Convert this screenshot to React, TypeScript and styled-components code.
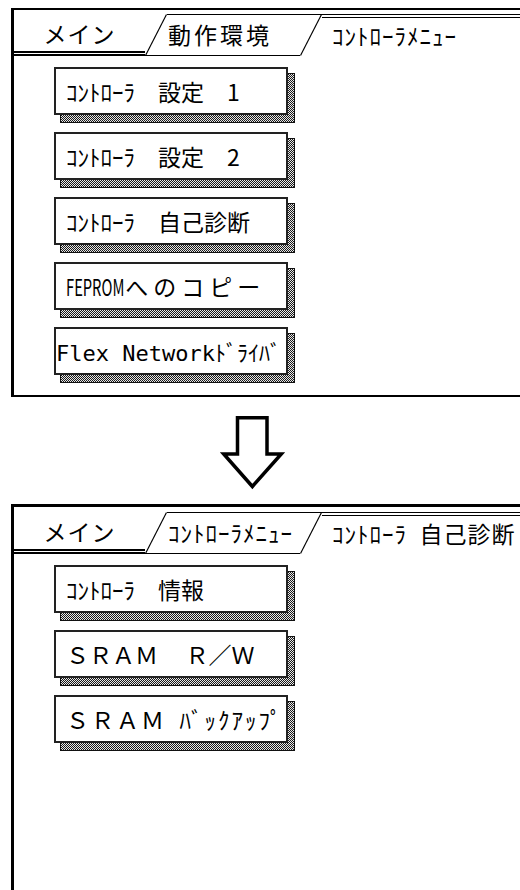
import type { ReactNode } from "react";
import styled, { createGlobalStyle } from "styled-components";

const GlobalStyle = createGlobalStyle`
  html, body {
    margin: 0;
    padding: 0;
    background: #ffffff;
  }
  body {
    font-family: "Noto Sans CJK JP", "Noto Sans", sans-serif;
    color: #000;
    overflow: hidden;
  }
`;

type Edge = "none" | "single" | "double";

const edge = (kind: Edge, doubleWidth: number) => {
  if (kind === "single") return "1px solid #000";
  if (kind === "double") return `${doubleWidth}px double #000`;
  return "0 none";
};

const Page = styled.div`
  width: 520px;
  height: 890px;
  padding-top: 8px;
  box-sizing: border-box;
  display: flex;
  flex-direction: column;
  overflow: hidden;
`;

const Panel = styled.section<{ $open?: boolean }>`
  flex-shrink: 0;
  margin-left: 11px;
  height: ${(p) => (p.$open ? "386px" : "389px")};
  box-sizing: border-box;
  border-left: 3px solid #000;
  border-top: ${(p) => (p.$open ? "3px" : "2px")} solid #000;
  border-bottom: ${(p) => (p.$open ? "none" : "2px solid #000")};
  display: flex;
  flex-direction: column;
`;

const TabBar = styled.div<{ $offset: number }>`
  display: flex;
  height: 42px;
  margin-top: ${(p) => p.$offset}px;
`;

const Tab = styled.div<{
  $top: Edge;
  $bottom: Edge;
  $width?: number;
  $pad: number;
  $lift?: number;
  $center?: boolean;
  $spacing: number;
}>`
  box-sizing: border-box;
  height: 100%;
  ${(p) => (p.$width ? `width: ${p.$width}px; flex-shrink: 0;` : "flex: 1;")}
  border-top: ${(p) => edge(p.$top, 4)};
  border-bottom: ${(p) => edge(p.$bottom, 5)};
  display: flex;
  align-items: center;
  justify-content: ${(p) => (p.$center ? "center" : "flex-start")};
  padding: 0 0 ${(p) => p.$lift ?? 0}px ${(p) => p.$pad}px;
  font-size: 23px;
  letter-spacing: ${(p) => p.$spacing}px;
  white-space: nowrap;
  overflow: hidden;
`;

const SlantBox = styled.svg`
  display: block;
  flex-shrink: 0;
  width: 22px;
  height: 42px;
`;

const Slant = ({ top, bottom }: { top?: boolean; bottom?: boolean }) => (
  <SlantBox viewBox="0 0 22 42">
    <line x1="0.5" y1="41.5" x2="21.5" y2="0.5" stroke="#000" strokeWidth="1.2" />
    {top && <line x1="0" y1="0.5" x2="22" y2="0.5" stroke="#000" strokeWidth="1" />}
    {bottom && <line x1="0" y1="41.5" x2="22" y2="41.5" stroke="#000" strokeWidth="1" />}
  </SlantBox>
);

const Menu = styled.div`
  display: flex;
  flex-direction: column;
  gap: 9px;
  padding: 11px 0 0 40px;
`;

const MenuItem = styled.div`
  position: relative;
  width: 234px;
  padding: 0 7px 8px 0;

  &::before {
    content: "";
    position: absolute;
    left: 6px;
    top: 6px;
    right: 0;
    bottom: 0;
    border: 1px solid #111;
    background: repeating-conic-gradient(#1a1a1a 0% 25%, #e8e8e8 0% 50%) 0 0 / 2px 2px;
  }
`;

const MenuButton = styled.button<{ $pad: number; $spacing: number; $mono?: boolean }>`
  position: relative;
  z-index: 1;
  display: flex;
  align-items: center;
  box-sizing: border-box;
  width: 234px;
  height: 48px;
  margin: 0;
  padding: 0 0 0 ${(p) => p.$pad}px;
  border: 2px solid #222;
  background: #fff;
  color: #000;
  font-family: ${(p) => (p.$mono ? '"DejaVu Sans Mono", ' : "")}"Noto Sans CJK JP", sans-serif;
  font-size: ${(p) => (p.$mono ? 22 : 23)}px;
  letter-spacing: ${(p) => p.$spacing}px;
  white-space: nowrap;
  overflow: hidden;
  cursor: pointer;
`;

const Condensed = styled.span`
  display: inline-block;
  transform: scaleX(0.64);
  transform-origin: left center;
  margin-right: -32px;
`;

const Wide = styled.span`
  letter-spacing: 5px;
`;

const ArrowRow = styled.div`
  flex-shrink: 0;
  height: 107px;
  box-sizing: border-box;
  padding: 16px 0 0 219px;
`;

const ArrowSvg = styled.svg`
  display: block;
  width: 68px;
  height: 82px;
`;

type Item = { id: string; label: ReactNode; pad?: number; spacing?: number; mono?: boolean };

const settingsMenu: Item[] = [
  { id: "set1", label: "ｺﾝﾄﾛｰﾗ\u3000設定\u30001" },
  { id: "set2", label: "ｺﾝﾄﾛｰﾗ\u3000設定\u30002" },
  { id: "diag", label: "ｺﾝﾄﾛｰﾗ\u3000自己診断" },
  {
    id: "feprom",
    label: (
      <>
        <Condensed>FEPROM</Condensed>
        <Wide>へのコピー</Wide>
      </>
    ),
  },
  { id: "flex", label: "Flex Networkﾄﾞﾗｲﾊﾞ", pad: 0, mono: true },
];

const diagMenu: Item[] = [
  { id: "info", label: "ｺﾝﾄﾛｰﾗ\u3000情報" },
  { id: "sram-rw", label: "ＳＲＡＭ\u3000\u2009Ｒ／Ｗ" },
  { id: "sram-bk", label: "ＳＲＡＭ\u2002ﾊﾞｯｸｱｯﾌﾟ", spacing: 2 },
];

const MenuList = ({ items }: { items: Item[] }) => (
  <Menu>
    {items.map((it) => (
      <MenuItem key={it.id}>
        <MenuButton $pad={it.pad ?? 10} $spacing={it.spacing ?? 0} $mono={it.mono}>
          {it.label}
        </MenuButton>
      </MenuItem>
    ))}
  </Menu>
);

const Tabs = ({ second, current, offset }: { second: string; current: string; offset: number }) => (
  <TabBar $offset={offset}>
    <Tab $top="none" $bottom="double" $width={131} $pad={0} $center $spacing={1}>
      メイン
    </Tab>
    <Slant bottom />
    <Tab $top="single" $bottom="single" $width={133} $pad={1} $lift={2} $spacing={second.length > 5 ? 1 : 3}>
      {second}
    </Tab>
    <Slant top />
    <Tab $top="double" $bottom="none" $pad={10} $lift={5} $spacing={1}>
      {current}
    </Tab>
  </TabBar>
);

const App = () => (
  <>
    <GlobalStyle />
    <Page>
      <Panel>
        <Tabs second="動作環境" current="ｺﾝﾄﾛｰﾗﾒﾆｭｰ" offset={4} />
        <MenuList items={settingsMenu} />
      </Panel>
      <ArrowRow>
        <ArrowSvg viewBox="0 0 68 82">
          <polygon
            points="18.5,4.7 48,4.7 48,41 62.3,41 33.4,73.5 4.7,41 18.5,41"
            fill="#fff"
            stroke="#000"
            strokeWidth="3.5"
            strokeLinejoin="miter"
          />
        </ArrowSvg>
      </ArrowRow>
      <Panel $open>
        <Tabs second="ｺﾝﾄﾛｰﾗﾒﾆｭｰ" current={"ｺﾝﾄﾛｰﾗ\u2002自己診断"} offset={5} />
        <MenuList items={diagMenu} />
      </Panel>
    </Page>
  </>
);

export default App;
